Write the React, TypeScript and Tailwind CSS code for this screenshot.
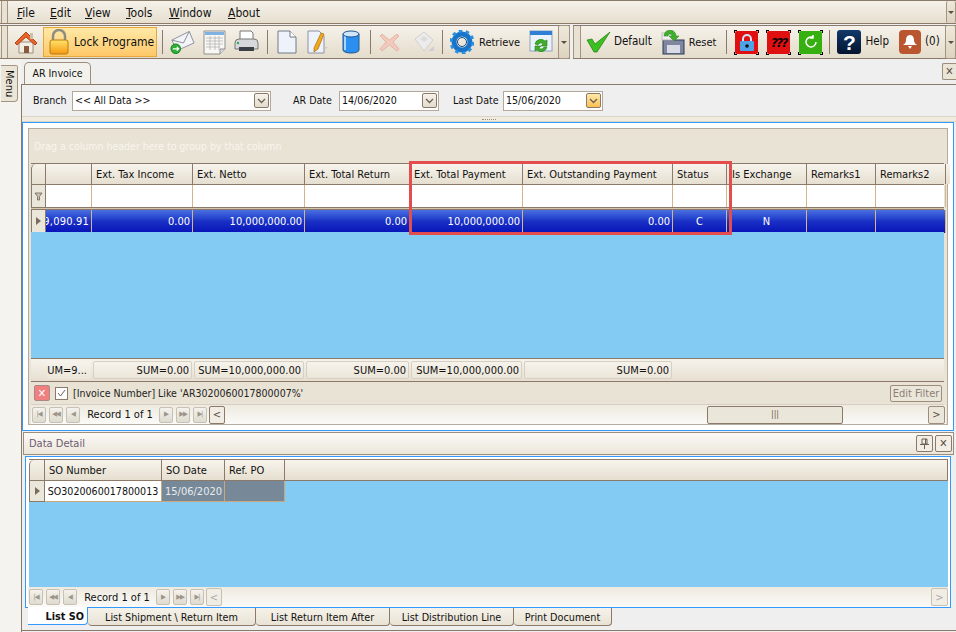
import type { ReactNode } from 'react'

const MENUS = [
  { key: 'F', rest: 'ile', w: 'w-[33px]' },
  { key: 'E', rest: 'dit', w: 'w-[35px]' },
  { key: 'V', rest: 'iew', w: 'w-[41px]' },
  { key: 'T', rest: 'ools', w: 'w-[43px]' },
  { key: 'W', rest: 'indow', w: 'w-[59px]' },
  { key: 'A', rest: 'bout', w: 'w-[40px]' },
]

const COLS = 'grid grid-cols-[15px_46px_101px_112px_105px_113px_150px_54px_80px_69px_70px_1fr]'
const HEADERS = ['', 'Ext. Tax Income', 'Ext. Netto', 'Ext. Total Return', 'Ext. Total Payment', 'Ext. Outstanding Payment', 'Status', 'Is Exchange', 'Remarks1', 'Remarks2', '']
const ROW = [
  { t: '9,090.91', c: 'text-right pr-[2px] overflow-hidden whitespace-nowrap [direction:rtl] tracking-[0.2px]' },
  { t: '0.00', c: 'text-right pr-[2px]' },
  { t: '10,000,000.00', c: 'text-right pr-[2px]' },
  { t: '0.00', c: 'text-right pr-[2px]' },
  { t: '10,000,000.00', c: 'text-right pr-[2px]' },
  { t: '0.00', c: 'text-right pr-[2px]' },
  { t: 'C', c: 'text-center' },
  { t: 'N', c: 'text-center' },
  { t: '', c: '' },
  { t: '', c: '' },
  { t: '', c: '' },
]
const SUMS = ['UM=9...', 'SUM=0.00', 'SUM=10,000,000.00', 'SUM=0.00', 'SUM=10,000,000.00', 'SUM=0.00']
const TABS = [
  { label: 'List Shipment \\ Return Item', w: 'w-[168px]' },
  { label: 'List Return Item After', w: 'w-[134px]' },
  { label: 'List Distribution Line', w: 'w-[124px]' },
  { label: 'Print Document', w: 'w-[98px]' },
]

function Home() {
  return (
    <svg width="24" height="25" viewBox="0 0 24 25">
      <path d="M5 12v11h14V12z" fill="#f3eee4" stroke="#9a8f80" />
      <path d="M1 13 12 2l11 11-2 2-9-8-9 8z" fill="#e8622a" stroke="#b8441a" />
      <rect x="10" y="16" width="5" height="7" fill="#8a5a3a" />
      <rect x="16" y="3" width="3" height="6" fill="#c9c0b0" />
    </svg>
  )
}
function Padlock() {
  return (
    <svg width="20" height="26" viewBox="0 0 20 26">
      <path d="M4 12V7a6 6 0 0 1 12 0v5" fill="none" stroke="#8c8c80" strokeWidth="2.5" />
      <defs>
        <linearGradient id="lk" x1="0" y1="0" x2="0" y2="1">
          <stop offset="0" stopColor="#ffe36a" />
          <stop offset="1" stopColor="#f59a10" />
        </linearGradient>
      </defs>
      <rect x="1" y="11" width="18" height="14" rx="2" fill="url(#lk)" stroke="#b87a10" />
    </svg>
  )
}
function Mail() {
  return (
    <svg width="25" height="25" viewBox="0 0 26 25">
      <path d="M2 10 20 1l5 12-18 8z" fill="#f2f4f8" stroke="#8a8f9a" />
      <path d="M2 10l12 3 6-12" fill="none" stroke="#8a8f9a" />
      <circle cx="6" cy="19" r="5" fill="#2fae35" stroke="#1d7f24" />
      <path d="M3 19h6M7 17l2 2-2 2" stroke="#fff" strokeWidth="1.3" fill="none" />
    </svg>
  )
}
function Sheet() {
  return (
    <svg width="24" height="25" viewBox="0 0 24 25">
      <path d="M1 1h21v18l-5 5H1z" fill="#f8f7f3" stroke="#8f8f8f" />
      <rect x="2" y="2" width="19" height="3" fill="#7fb2e0" />
      <path d="M3 8h17M3 11h17M3 14h17M3 17h14M7 6v14M12 6v14M16 6v14" stroke="#b5b5b5" strokeWidth=".8" />
      <path d="M17 24v-5h5" fill="#ddd" stroke="#8f8f8f" />
    </svg>
  )
}
function Printer() {
  return (
    <svg width="25" height="24" viewBox="0 0 25 24">
      <path d="M6 10V1h11l2 2v7z" fill="#fff" stroke="#777" />
      <path d="M1 13q0-4 4-4h15q4 0 4 4v6H1z" fill="#d6d8dc" stroke="#777" />
      <rect x="5" y="17" width="15" height="4" fill="#3b3f46" />
      <circle cx="4" cy="13" r="1.2" fill="#34a853" />
    </svg>
  )
}
function Doc() {
  return (
    <svg width="20" height="24" viewBox="0 0 20 24">
      <path d="M1 1h12l6 6v16H1z" fill="#eef3fb" stroke="#707a8a" />
      <path d="M13 1v6h6" fill="#fff" stroke="#707a8a" />
    </svg>
  )
}
function EditDoc() {
  return (
    <svg width="22" height="24" viewBox="0 0 22 24">
      <path d="M1 1h11l5 5v17H1z" fill="#eef3fb" stroke="#8a93a3" />
      <path d="M7 18 14 3l3 1-6 15-4 3z" fill="#f2a81d" stroke="#a76f0b" strokeWidth=".7" />
      <path d="M17 17h4l-3 2z" fill="#c9c9c9" />
    </svg>
  )
}
function Db() {
  return (
    <svg width="18" height="24" viewBox="0 0 18 24">
      <path d="M1 4v16c0 4 16 4 16 0V4z" fill="#2a8ff0" stroke="#21588f" />
      <path d="M3 6v14" stroke="#a9d6ff" strokeWidth="2" />
      <ellipse cx="9" cy="4" rx="8" ry="3" fill="#cfe6fb" stroke="#21588f" />
    </svg>
  )
}
function RedX() {
  return (
    <svg width="21" height="20" viewBox="0 0 21 20">
      <path d="M3 2 10.500 8 18 2l2 2-6 6 6 7-2 2-7.500-6L3 19l-2-2 6-7-6-6z" fill="#f1c9bd" stroke="#e5b5a6" />
    </svg>
  )
}
function Floppy() {
  return (
    <svg width="21" height="22" viewBox="0 0 21 22">
      <path d="M1 8 10 1l9 8-9 11z" fill="#ececec" stroke="#cfcfcf" />
      <path d="M6 8l4-3 4 3-4 3z" fill="#dcdcdc" />
      <path d="M14 20l6-5v5z" fill="#d0d0d0" />
    </svg>
  )
}
function Gear() {
  return (
    <svg width="24" height="24" viewBox="0 0 24 24">
      <circle cx="12" cy="12" r="8" fill="none" stroke="#1874c9" strokeWidth="5" />
      <circle cx="12" cy="12" r="11" fill="none" stroke="#2b8fe0" strokeWidth="3" strokeDasharray="3.500 3.400" />
      <circle cx="12" cy="12" r="4.500" fill="none" stroke="#0d4f91" />
    </svg>
  )
}
function RefreshWin() {
  return (
    <svg width="24" height="25" viewBox="0 0 24 25">
      <rect x="1" y="1" width="22" height="20" fill="#eaf3fb" stroke="#8aa4bb" />
      <rect x="1" y="1" width="22" height="4" fill="#2f7fd6" />
      <path d="M6 14a6 6 0 0 1 10-3l2-1v6h-6l2-2a3 3 0 0 0-5 1z" fill="#3fae2a" stroke="#26801a" strokeWidth=".6" />
      <path d="M18 17a6 6 0 0 1-10 3l-2 1v-5h6l-2 2a3 3 0 0 0 5-1z" fill="#3fae2a" stroke="#26801a" strokeWidth=".6" />
    </svg>
  )
}
function Check() {
  return (
    <svg width="25" height="22" viewBox="0 0 25 22">
      <path d="M1 9 6 8l3 5L24 1 11 21H8z" fill="#3cc021" stroke="#1e7a10" strokeWidth=".7" />
    </svg>
  )
}
function ResetIcon() {
  return (
    <svg width="25" height="25" viewBox="0 0 25 25">
      <rect x="3" y="10" width="21" height="14" fill="#7f86a0" stroke="#2c3a55" />
      <rect x="7" y="15" width="13" height="8" fill="#d9dce6" />
      <rect x="2" y="3" width="12" height="7" fill="#eee" stroke="#bbb" />
      <path d="M4 6a6 6 0 0 1 12 0h3l-5 5-5-5h3a2 2 0 0 0-4 0z" fill="#3fae2a" stroke="#26801a" strokeWidth=".5" />
    </svg>
  )
}
function Corners({ bg, children }: { bg: string; children: ReactNode }) {
  return (
    <div className={`relative w-[23px] h-[23px] flex items-center justify-center rounded-[2px] ${bg}`}>
      <span className="absolute -left-px -top-px w-[3px] h-[3px] border-l border-t border-black" />
      <span className="absolute -right-px -top-px w-[3px] h-[3px] border-r border-t border-black" />
      <span className="absolute -left-px -bottom-px w-[3px] h-[3px] border-l border-b border-black" />
      <span className="absolute -right-px -bottom-px w-[3px] h-[3px] border-r border-b border-black" />
      {children}
    </div>
  )
}
function HelpIcon() {
  return (
    <div className="w-[24px] h-[24px] rounded-[3px] bg-linear-to-b from-[#123a6b] to-[#04142e] flex items-center justify-center text-white text-[21px] font-bold leading-none [font-family:'Liberation_Sans',sans-serif]">
      ?
    </div>
  )
}
function BellIcon() {
  return (
    <div className="w-[22px] h-[24px] rounded-[4px] bg-[#b9552f] flex items-center justify-center">
      <svg width="16" height="16" viewBox="0 0 16 16">
        <path d="M8 1c3 0 4 3 4 5s1 4 3 5H1c2-1 3-3 3-5s1-5 4-5z" fill="#fff" />
        <path d="M6 12h4l-2 3z" fill="#fff" />
      </svg>
    </div>
  )
}

function Sep({ ml, mr }: { ml: string; mr: string }) {
  return <div className={`w-px h-[24px] bg-[#8b7a69] ${ml} ${mr}`} />
}
function Chevron({ className }: { className: string }) {
  return (
    <div className={`flex items-center justify-center bg-linear-to-b from-[#efe9dc] to-[#ddd3bf] border border-[#a39482] rounded-[2px] ${className}`}>
      <span className="w-0 h-0 border-x-[3px] border-x-transparent border-t-[3px] border-t-[#5b4f44]" />
    </div>
  )
}
function DropBtn({ active }: { active?: boolean }) {
  return (
    <div className={`ml-auto w-[15px] h-[15px] mr-[1px] flex items-center justify-center rounded-[2px] border border-[#8b7a69] ${active ? 'bg-linear-to-b from-[#ffe9a8] to-[#fbbf50]' : 'bg-linear-to-b from-[#f6f3ec] to-[#e3dccd]'}`}>
      <svg width="9" height="6" viewBox="0 0 9 6">
        <path d="M1 1l3.500 3.500L8 1" fill="none" stroke="#6d5f50" strokeWidth="1.300" />
      </svg>
    </div>
  )
}
function Field({ w, value, active }: { w: string; value: string; active?: boolean }) {
  return (
    <div className={`${w} h-[20px] flex items-center bg-white border border-[#b5a89a] pl-[2px] text-[#111]`}>
      <span>{value}</span>
      <DropBtn active={active} />
    </div>
  )
}
function NavBtn({ glyph }: { glyph: string }) {
  return (
    <div className="w-[14px] h-[16px] flex items-center justify-center rounded-[2px] border border-[#c6c0b5] bg-linear-to-b from-[#f4f2ec] to-[#dfdbd0] text-[#9b958a] text-[7px] leading-none tracking-[-1px]">
      {glyph}
    </div>
  )
}
function Pager({ lastActive }: { lastActive: boolean }) {
  return (
    <>
      <div className="flex gap-[3px]">
        <NavBtn glyph="|◀" />
        <NavBtn glyph="◀◀" />
        <NavBtn glyph="◀" />
      </div>
      <span className="w-[79px] pl-px text-center text-[#111] whitespace-nowrap">Record 1 of 1</span>
      <div className="flex gap-[3px]">
        <NavBtn glyph="▶" />
        <NavBtn glyph="▶▶" />
        <NavBtn glyph="▶|" />
      </div>
      <div className={`ml-[2px] w-[16px] h-[18px] flex items-center justify-center rounded-[2px] border bg-[#f1ede4] ${lastActive ? 'border-[#8b7a69] text-[#5b4f44]' : 'border-[#c6c0b5] text-[#aaa]'}`}>
        &lt;
      </div>
    </>
  )
}
function ToolText({ children, className }: { children: ReactNode; className: string }) {
  return <span className={`text-[#111] whitespace-nowrap ${className}`}>{children}</span>
}

export default function App() {
  return (
    <div className="relative w-[956px] h-[632px] overflow-hidden flex flex-col bg-[#efefef] text-[11px] leading-none text-[#222] [font-family:'DejaVu_Sans_Condensed','DejaVu_Sans',sans-serif]">
      {/* menu bar */}
      <div className="h-[24px] flex items-center border-y border-[#8b7a69] bg-linear-to-b from-[#f6f2ea] to-[#e6dfcf]">
        <div className="w-[7px] h-full ml-[1px] border-x border-[#a39482] bg-[#e9e2d3]" />
        <div className="flex ml-[9px] pt-px text-[12px]">
          {MENUS.map(m => (
            <span key={m.key} className={`${m.w} text-[#111]`}>
              <span className="underline">{m.key}</span>
              {m.rest}
            </span>
          ))}
        </div>
        <Chevron className="ml-auto w-[10px] h-full border-y-0" />
      </div>

      {/* toolbars */}
      <div className="h-[34px] mt-px flex items-stretch border-y border-[#8b7a69] bg-linear-to-b from-[#f6f2ea] to-[#e4dccb] text-[11.5px]">
        <div className="w-[7px] ml-[1px] border-x border-[#a39482] bg-[#e9e2d3]" />
        <div className="flex items-center ml-[6px] w-[544px]">
          <Home />
          <div className="ml-[5px] w-[114px] h-[30px] flex items-center border border-[#e6a83a] bg-linear-to-b from-[#ffe9a6] to-[#fdc868] pl-[5px]">
            <Padlock />
            <ToolText className="ml-[5px] text-[12px]">Lock Programe</ToolText>
          </div>
          <Sep ml="ml-[5px]" mr="mr-[7px]" />
          <Mail />
          <div className="ml-[8px]"><Sheet /></div>
          <div className="ml-[7px]"><Printer /></div>
          <Sep ml="ml-[8px]" mr="mr-[9px]" />
          <Doc />
          <div className="ml-[10px]"><EditDoc /></div>
          <div className="ml-[13px]"><Db /></div>
          <Sep ml="ml-[10px]" mr="mr-[8px]" />
          <RedX />
          <div className="ml-[14px]"><Floppy /></div>
          <Sep ml="ml-[7px]" mr="mr-[7px]" />
          <Gear />
          <ToolText className="ml-[5px] text-[11px]">Retrieve</ToolText>
          <div className="ml-[9px]"><RefreshWin /></div>
        </div>
        <Chevron className="w-[12px] -my-px" />
        <div className="w-[3px] bg-[#efefef] -my-px" />
        <div className="w-[8px] border-x border-[#a39482] bg-[#e9e2d3]" />
        <div className="flex items-center ml-[5px] flex-1">
          <Check />
          <ToolText className="ml-[3px]">Default</ToolText>
          <div className="ml-[8px]"><ResetIcon /></div>
          <ToolText className="ml-[4px] text-[11px]">Reset</ToolText>
          <Sep ml="ml-[10px]" mr="mr-[8px]" />
          <Corners bg="bg-[#e01010]">
            <svg width="18" height="19" viewBox="0 0 18 19">
              <path d="M5 9V6a4 4 0 0 1 8 0v3" fill="none" stroke="#cfe4f7" strokeWidth="2" />
              <rect x="2" y="8" width="14" height="10" rx="1" fill="#4da3e8" />
              <circle cx="9" cy="13" r="1.800" fill="#111" />
            </svg>
          </Corners>
          <div className="ml-[9px]">
            <Corners bg="bg-[#e01010]">
              <span className="text-black font-bold text-[13px] italic tracking-[-1.5px]">???</span>
            </Corners>
          </div>
          <div className="ml-[9px]">
            <Corners bg="bg-[#35b010]">
              <svg width="16" height="16" viewBox="0 0 16 16">
                <path d="M13 8a5 5 0 1 1-3-4.600M10 1v3H7" fill="none" stroke="#fff" strokeWidth="1.500" />
              </svg>
            </Corners>
          </div>
          <Sep ml="ml-[7px]" mr="mr-[7px]" />
          <HelpIcon />
          <ToolText className="ml-[4px]">Help</ToolText>
          <div className="ml-[10px]"><BellIcon /></div>
          <ToolText className="ml-[4px]">(0)</ToolText>
        </div>
        <Chevron className="w-[11px] -my-px" />
      </div>

      <div className="flex-1 flex min-h-0">
        {/* side strip */}
        <div className="w-[21px] bg-[#f5f3ef] pt-[6px]">
          <div className="w-[17px] h-[37px] ml-px flex items-center justify-center rounded-br-[4px] rounded-tr-[2px] border border-l-0 border-[#a39482] bg-[#ebe5d8]">
            <span className="[writing-mode:vertical-rl] text-[#111]">Menu</span>
          </div>
        </div>

        <div className="flex-1 flex flex-col min-w-0 relative">
          {/* document tab strip */}
          <div className="h-[25px] flex items-end pl-[3px] relative shrink-0">
            <div className="w-[67px] h-[22px] flex items-center justify-center rounded-t-[5px] border border-b-0 border-[#9c8d7d] bg-[#f3f1ec] text-[#111] text-[10.6px] relative z-10">
              AR Invoice
            </div>
            <div className="absolute right-0 top-[4px] w-[14px] h-[17px] flex items-center justify-center rounded-l-[2px] border border-r-0 border-[#9c8d7d] bg-[#ebe5d8] text-[#5b4f44] font-bold text-[11px]">
              ✕
            </div>
          </div>

          <div className="flex-1 flex flex-col border-l border-[#8b7a69] border-t min-h-0">
            {/* filters */}
            <div className="h-[31px] flex items-center shrink-0 text-[10.6px]">
              <span className="ml-[11px] w-[39px] text-[#111]">Branch</span>
              <Field w="w-[199px]" value="<< All Data >>" />
              <span className="ml-[22px] w-[46px] text-[#111]">AR Date</span>
              <Field w="w-[100px]" value="14/06/2020" />
              <span className="ml-[14px] w-[50px] text-[#111]">Last Date</span>
              <Field w="w-[100px]" value="15/06/2020" active />
            </div>
            <div className="h-[6px] shrink-0 flex items-center justify-center bg-[#f0ebdf] border-y border-[#dcd5c6]">
              <span className="w-[14px] border-t border-dotted border-[#9b8e7f] ml-[-1px]" />
            </div>

            {/* main grid */}
            <div className="h-[309px] mr-[2px] shrink-0 border border-[#3399ff] bg-white p-[5px] relative">
              <div className="h-full border border-[#b5aca0] bg-[#e9e3d5] flex flex-col pl-[2px] pr-[3px]">
                <div className="h-[34px] pl-[3px] pt-[12px] text-[10.5px] text-[#f8f5ee] shrink-0 whitespace-nowrap">
                  Drag a column header here to group by that column
                </div>
                <div className={`${COLS} h-[22px] border-y border-[#8b7a69] shrink-0`}>
                  <div className="border-x border-[#8b7a69] bg-linear-to-b from-[#f5f2ea] to-[#e7e0d1] rounded-tl-[5px]" />
                  {HEADERS.map((h, i) => (
                    <div key={i} className={`flex items-center pt-px border-r border-[#8b7a69] bg-linear-to-b from-[#f7f4ed] to-[#e6dfd0] text-[#111] whitespace-nowrap last:border-r-0 ${h === 'Is Exchange' ? 'pl-[5px]' : 'pl-[4px]'}`}>
                      {h}
                    </div>
                  ))}
                </div>
                <div className={`${COLS} h-[22px] shrink-0 bg-white`}>
                  <div className="border-x border-[#8b7a69] bg-[#ebe6da] flex items-center justify-center">
                    <svg width="9" height="9" viewBox="0 0 9 9">
                      <path d="M1 1h7L5.500 4.500V8h-2V4.500z" fill="#c9c2b4" stroke="#6f6356" strokeWidth=".8" />
                    </svg>
                  </div>
                  {HEADERS.map((_, i) => (
                    <div key={i} className="border-r border-[#d5b68c] last:border-r-0" />
                  ))}
                </div>
                <div className="h-[3px] shrink-0 border-y border-[#8b7a69] bg-[#d5c6ae]" />
                <div className={`${COLS} h-[22px] shrink-0`}>
                  <div className="border-x border-[#8b7a69] border-b bg-[#ebe6da] flex items-center justify-center">
                    <span className="w-0 h-0 border-y-[4px] border-y-transparent border-l-[5px] border-l-[#7a6d5f]" />
                  </div>
                  {ROW.map((c, i) => (
                    <div key={i} className={`leading-[23px] border-r border-[#d5b68c] bg-linear-to-b from-[#4a6ee0] via-[#1a2fc5] to-[#0810b8] text-white last:border-r-0 ${c.c}`}>
                      {c.t}
                    </div>
                  ))}
                </div>
                <div className="flex-1 bg-[#83cbf3]" />
                <div className={`${COLS} h-[24px] items-center shrink-0 border-y border-[#8b7a69] bg-linear-to-b from-[#f6f3ec] to-[#e6dfd0]`}>
                  <div />
                  {SUMS.map((s, i) => (
                    <div key={i} className={`h-[18px] ml-[1px] mr-[1px] flex items-center justify-end text-[#111] whitespace-nowrap rounded-[2px] bg-linear-to-b from-[#f6f3ec] to-[#ece6d9] ${i === 0 ? 'pr-[4px]' : 'pr-[2px] border border-[#d6cfc2]'}`}>
                      {s}
                    </div>
                  ))}
                </div>
                <div className="h-[23px] flex items-center shrink-0 pl-[3px] pr-[2px] border-b border-[#d6cfc2]">
                  <div className="w-[16px] h-[16px] flex items-center justify-center rounded-[2px] border border-[#a88] bg-[#f08080] text-white font-bold text-[11px]">✕</div>
                  <div className="ml-[5px] w-[13px] h-[13px] flex items-center justify-center border border-[#8b7a69] bg-white">
                    <svg width="9" height="8" viewBox="0 0 9 8">
                      <path d="M1 4l2.500 3L8 1" fill="none" stroke="#6d5f50" />
                    </svg>
                  </div>
                  <span className="ml-[5px] pt-px text-[10.5px] text-[#222]">[Invoice Number] Like 'AR3020060017800007%'</span>
                  <div className="ml-auto w-[52px] h-[17px] flex items-center justify-center rounded-[2px] border border-[#9c8d7d] bg-[#ebe6da] text-[#8b8176]">Edit Filter</div>
                </div>
                <div className="h-[19px] shrink-0 flex items-center pl-[1px] -mr-[2px] bg-linear-to-b from-[#eeeae0] to-[#fbfaf7]">
                  <Pager lastActive />
                  <div className="ml-[482px] w-[136px] h-[18px] flex items-center justify-center rounded-[2px] border border-[#8b7a69] bg-[#ebe6da] text-[#6d5f50] text-[9px]">|||</div>
                  <div className="ml-auto mr-px w-[17px] h-[18px] flex items-center justify-center rounded-[2px] border border-[#9c8d7d] bg-[#ebe6da] text-[#5b4f44]">&gt;</div>
                </div>
              </div>
              {/* red annotation drawn over the grid */}
              <div className="absolute left-[386px] top-[38px] w-[323px] h-[74px] border-[3px] border-[#e44d4d]" />
            </div>

            {/* detail panel */}
            <div className="ml-[1px] mr-[2px] mt-px h-[23px] shrink-0 flex items-center border border-[#9c8d7d] bg-linear-to-b from-[#fbfaf6] to-[#ebe6da] pl-[5px] text-[#6f5a72]">
              <span>Data Detail</span>
              <div className="ml-auto mr-[1px] flex gap-[2px]">
                <div className="w-[17px] h-[17px] flex items-center justify-center rounded-[2px] border border-[#8b7a69] bg-[#f2eee5]">
                  <svg width="9" height="11" viewBox="0 0 9 11">
                    <path d="M2 1h5v5H2zM0 6.500h9M4.500 7v4M5.500 1v5" fill="none" stroke="#6d5f50" />
                  </svg>
                </div>
                <div className="w-[17px] h-[17px] flex items-center justify-center rounded-[2px] border border-[#8b7a69] bg-[#f2eee5] text-[#5b4f44] font-bold text-[11px]">✕</div>
              </div>
            </div>

            <div className="ml-[3px] mr-[5px] mt-px h-[152px] shrink-0 border border-[#3399ff] bg-white pt-[2px] pl-[3px] pr-[2px] flex flex-col">
              <div className="grid grid-cols-[16px_117px_63px_60px_1fr] h-[22px] border-y border-[#8b7a69] shrink-0">
                <div className="border-x border-[#8b7a69] bg-linear-to-b from-[#f5f2ea] to-[#e7e0d1] rounded-tl-[5px]" />
                {['SO Number', 'SO Date', 'Ref. PO', ''].map((h, i) => (
                  <div key={i} className="flex items-center pl-[4px] pt-px border-r border-[#8b7a69] bg-linear-to-b from-[#f7f4ed] to-[#e6dfd0] text-[#111]">{h}</div>
                ))}
              </div>
              <div className="flex-1 bg-[#83cbf3] flex flex-col min-h-0">
                <div className="grid grid-cols-[16px_117px_63px_60px] w-fit h-[21px]">
                  <div className="border-x border-b border-[#8b7a69] bg-[#ebe6da] flex items-center justify-center">
                    <span className="w-0 h-0 border-y-[4px] border-y-transparent border-l-[5px] border-l-[#7a6d5f]" />
                  </div>
                  <div className="flex items-center justify-center pt-px bg-white border-r border-b border-[#c9a77d] text-[10.6px] text-[#111] whitespace-nowrap">SO3020060017800013</div>
                  <div className="flex items-center pl-[3px] pt-px bg-[#778899] border-r border-b border-[#c9a77d] text-[#e8ecef]">15/06/2020</div>
                  <div className="bg-[#778899] border-r border-b border-[#c9a77d]" />
                </div>
              </div>
              <div className="h-[20px] shrink-0 -ml-[1px] flex items-center pl-[1px] bg-linear-to-b from-[#eeeae0] to-[#fbfaf7]">
                <Pager lastActive={false} />
                <div className="ml-auto w-[17px] h-[18px] flex items-center justify-center rounded-[2px] border border-[#c6c0b5] bg-[#f1ede4] text-[#aaa]">&gt;</div>
              </div>
            </div>

            {/* bottom tabs */}
            <div className="h-[19px] ml-[6px] shrink-0 flex text-[#111] text-[10.75px]">
              <div className="w-[60px] h-[18px] -mt-px flex items-center justify-end pr-[3px] pt-[3px] font-bold bg-white border-b border-r border-[#3399ff] rounded-br-[4px]">List SO</div>
              {TABS.map(t => (
                <div key={t.label} className={`${t.w} h-[18px] flex items-center justify-center pt-[3px] border-b border-r border-[#8b7a69] rounded-b-[4px] bg-linear-to-b from-[#f5f2ea] to-[#e9e3d5]`}>
                  {t.label}
                </div>
              ))}
            </div>
            <div className="h-[3px] shrink-0" />
            <div className="flex-1 border-t border-[#8b7a69]" />
          </div>
        </div>
      </div>
    </div>
  )
}
